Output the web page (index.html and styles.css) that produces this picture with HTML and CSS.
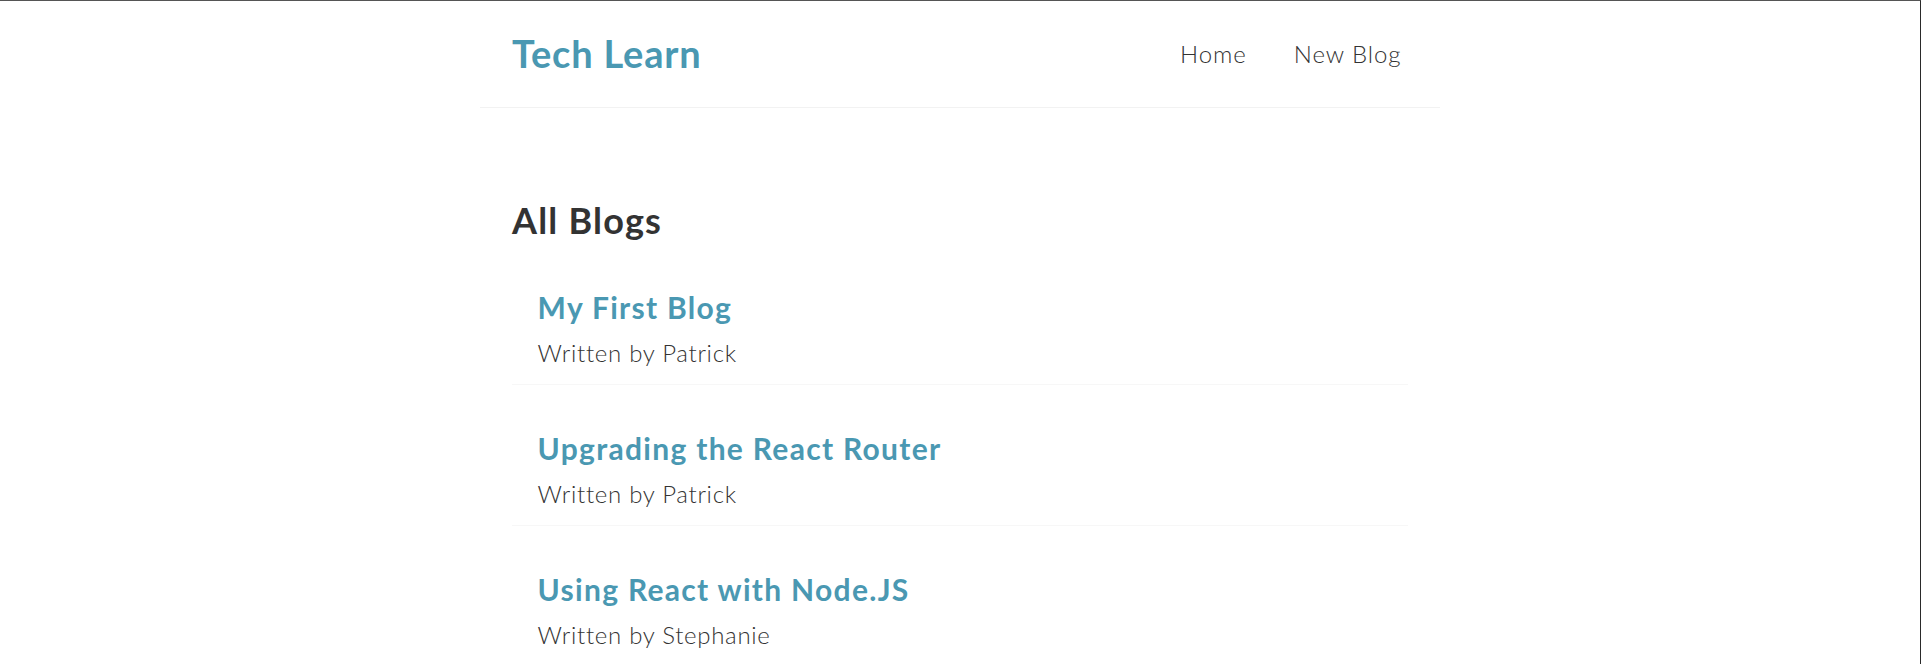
FILE: index.html
```html
<!DOCTYPE html>
<html lang="en">
<head>
<meta charset="utf-8">
<title>Tech Learn</title>
<link rel="stylesheet" href="styles.css">
</head>
<body>
<div class="app">
  <nav class="navbar">
    <h1 class="brand">Tech Learn</h1>
    <div class="links">
      <a href="#" class="link">Home</a>
      <a href="#" class="link">New Blog</a>
    </div>
  </nav>
  <main class="content">
    <h2 class="page-title">All Blogs</h2>
    <div class="blog-list">
      <div class="blog-preview">
        <h2 class="blog-title">My First Blog</h2>
        <p class="blog-author">Written by Patrick</p>
      </div>
      <div class="blog-preview">
        <h2 class="blog-title">Upgrading the React Router</h2>
        <p class="blog-author">Written by Patrick</p>
      </div>
      <div class="blog-preview">
        <h2 class="blog-title">Using React with Node.JS</h2>
        <p class="blog-author">Written by Stephanie</p>
      </div>
    </div>
  </main>
</div>
</body>
</html>
```
FILE: styles.css
```css
* {
  margin: 0;
  box-sizing: border-box;
}

html {
  border-top: 1px solid #555555;
  border-right: 1px solid #2a2a2a;
  background: #ffffff;
}

body {
  margin: 0;
  font-family: "Lato", "Open Sans", sans-serif;
  color: #333333;
  line-height: 1.2;
}

.navbar {
  max-width: 960px;
  height: 107px;
  margin: 0 auto;
  padding: 0 32px;
  display: flex;
  align-items: center;
  border-bottom: 1px solid #f2f2f2;
}

.brand {
  font-size: 38px;
  font-weight: 700;
  color: #4a98b2;
  letter-spacing: 0.8px;
}

.links {
  margin-left: auto;
  display: flex;
}

.link {
  margin-left: 25.6px;
  padding: 9.6px;
  font-size: 24px;
  font-weight: 300;
  color: #333333;
  text-decoration: none;
  letter-spacing: 0.9px;
}

.link + .link {
  margin-left: 28px;
  margin-right: -3px;
}

.content {
  max-width: 960px;
  margin: 0 auto;
  padding: 92px 32px 32px;
}

.page-title {
  font-size: 36px;
  font-weight: 700;
  color: #333333;
  letter-spacing: 1.2px;
  line-height: 41px;
}

.blog-list {
  display: flex;
  flex-direction: column;
  gap: 30px;
  margin-top: 33px;
}

.blog-preview {
  padding: 15px 25.6px 16px;
  border-bottom: 1px solid #f7f7f7;
  display: flex;
  flex-direction: column;
  gap: 14px;
}

.blog-title {
  font-size: 30px;
  font-weight: 700;
  color: #4a98b2;
  letter-spacing: 1.3px;
}

.blog-author {
  font-size: 24px;
  font-weight: 300;
  color: #333333;
  letter-spacing: 0.7px;
}
```
